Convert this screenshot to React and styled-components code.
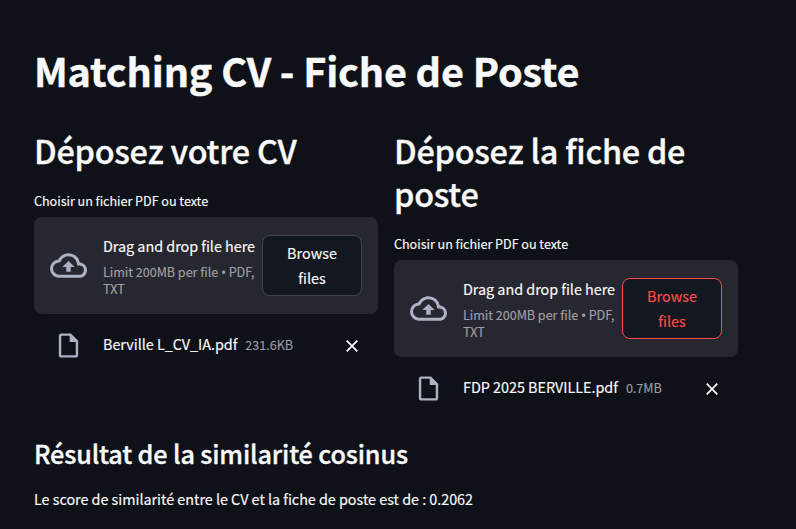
import React from "react";
import styled, { createGlobalStyle } from "styled-components";

const GlobalStyle = createGlobalStyle`
  * { box-sizing: border-box; }
  body {
    margin: 0;
    background: #0e1117;
    color: #fafafa;
    font-family: "Noto Sans CJK SC", "Noto Sans", sans-serif;
    font-size: 14.4px;
    letter-spacing: -0.035px;
    -webkit-text-stroke: 0.15px currentColor;
    overflow: hidden;
  }
`;

const Page = styled.main`
  width: 796px;
  height: 529px;
  padding: 43px 58px 0 34px;
  overflow: hidden;
`;

const Title = styled.h1`
  margin: 0;
  font-size: 39.6px;
  font-weight: 700;
  line-height: 53px;
  letter-spacing: -0.15px;
  -webkit-text-stroke: 0.4px currentColor;
  white-space: nowrap;
`;

const Columns = styled.div`
  display: grid;
  grid-template-columns: 344px 344px;
  gap: 16px;
  height: 308px;
  margin-top: 32px;
`;

const Column = styled.section`
  display: flex;
  flex-direction: column;
`;

const Heading = styled.h2`
  margin: 0;
  font-size: 32.4px;
  font-weight: 500;
  line-height: 43px;
  letter-spacing: -0.23px;
  -webkit-text-stroke: 0.35px currentColor;
  white-space: nowrap;
`;

const Label = styled.label`
  margin-top: 19px;
  font-size: 12.6px;
  line-height: 22px;
  height: 27px;
`;

const Dropzone = styled.div`
  display: flex;
  align-items: center;
  height: 97px;
  padding: 0 16px;
  border-radius: 8px;
  background: #262730;
`;

const CloudIcon = styled.svg`
  width: 37px;
  height: 37px;
  flex: none;
  fill: #acb1c4;
`;

const Instructions = styled.div`
  width: 159px;
  margin-left: 16px;
  flex: none;
  white-space: nowrap;
`;

const Prompt = styled.div`
  height: 29px;
  line-height: 23px;
`;

const Limit = styled.div`
  font-size: 12.6px;
  line-height: 17.5px;
  color: #a0a0a4;
`;

const Bullet = styled.span`
  font-family: "Open Sans", sans-serif;
  font-size: 14px;
  letter-spacing: -0.4px;
  line-height: 1;
  vertical-align: -1px;
`;

const BrowseButton = styled.button`
  width: 100px;
  height: 61px;
  flex: none;
  padding: 0 12px 2px;
  border: 1px solid ${(p) => (p.$active ? "#ff4b4b" : "#41444c")};
  border-radius: 8px;
  background: #131720;
  color: ${(p) => (p.$active ? "#ff4b4b" : "#fafafa")};
  font: inherit;
  line-height: 25px;
`;

const FileRow = styled.div`
  display: flex;
  align-items: center;
  height: 26px;
  margin-top: 18px;
  padding: 0 16px 0 20px;
`;

const FileIcon = styled.svg`
  width: 29px;
  height: 29px;
  flex: none;
  fill: #acb1c4;
`;

const FileName = styled.span`
  margin-left: 20px;
  padding-bottom: 2px;
  line-height: 24px;
  white-space: nowrap;
`;

const FileSize = styled.span`
  margin-left: 8px;
  font-size: 12.6px;
  line-height: 24px;
  color: #9c9c9f;
`;

const CloseButton = styled.button`
  display: flex;
  align-items: center;
  justify-content: center;
  width: 20px;
  height: 20px;
  margin-left: auto;
  padding: 1px 0 0;
  border: 0;
  background: none;
  color: #fafafa;
`;

const ResultHeading = styled.h3`
  margin: 0;
  font-size: 25.2px;
  font-weight: 500;
  line-height: 34px;
  letter-spacing: -0.13px;
  -webkit-text-stroke: 0.35px currentColor;
  white-space: nowrap;
`;

const Score = styled.p`
  margin: 17px 0 0;
  line-height: 24px;
  white-space: nowrap;
`;

function Uploader({ heading, file, size, active }) {
  return (
    <Column>
      <Heading>{heading}</Heading>
      <Label>Choisir un fichier PDF ou texte</Label>
      <Dropzone>
        <CloudIcon viewBox="0 0 24 24">
          <path d="M19.35 10.04A7.49 7.49 0 0 0 12 4C9.11 4 6.6 5.64 5.35 8.04A5.994 5.994 0 0 0 0 14c0 3.31 2.69 6 6 6h13c2.76 0 5-2.24 5-5 0-2.64-2.05-4.78-4.65-4.96zM19 18H6c-2.21 0-4-1.79-4-4 0-2.05 1.53-3.76 3.56-3.97l1.07-.11.5-.95A5.469 5.469 0 0 1 12 6c2.62 0 4.88 1.86 5.39 4.43l.3 1.5 1.53.11A2.98 2.98 0 0 1 22 15c0 1.65-1.35 3-3 3zM8 13h2.55v3h2.9v-3H16l-4-4z" />
        </CloudIcon>
        <Instructions>
          <Prompt>Drag and drop file here</Prompt>
          <Limit>
            Limit 200MB per file <Bullet>•</Bullet> PDF,
            <br />
            TXT
          </Limit>
        </Instructions>
        <BrowseButton $active={active}>Browse files</BrowseButton>
      </Dropzone>
      <FileRow>
        <FileIcon viewBox="0 0 24 24">
          <path d="M14 2H6c-1.1 0-2 .9-2 2v16c0 1.1.89 2 1.99 2H18c1.1 0 2-.9 2-2V8l-6-6zM6 20V4h7v5h5v11H6z" />
        </FileIcon>
        <FileName>{file}</FileName>
        <FileSize>{size}</FileSize>
        <CloseButton aria-label="Supprimer">
          <svg width="12" height="12" viewBox="0 0 12 12" fill="none" stroke="currentColor" strokeWidth="1.7">
            <path d="M.7.7l10.6 10.6M11.3.7L.7 11.3" />
          </svg>
        </CloseButton>
      </FileRow>
    </Column>
  );
}

export default function App() {
  return (
    <Page>
      <GlobalStyle />
      <Title>Matching CV - Fiche de Poste</Title>
      <Columns>
        <Uploader heading="Déposez votre CV" file="Berville L_CV_IA.pdf" size="231.6KB" />
        <Uploader
          heading={<>Déposez la fiche de<br />poste</>}
          file="FDP 2025 BERVILLE.pdf"
          size="0.7MB"
          active
        />
      </Columns>
      <ResultHeading>Résultat de la similarité cosinus</ResultHeading>
      <Score>Le score de similarité entre le CV et la fiche de poste est de : 0.2062</Score>
    </Page>
  );
}
